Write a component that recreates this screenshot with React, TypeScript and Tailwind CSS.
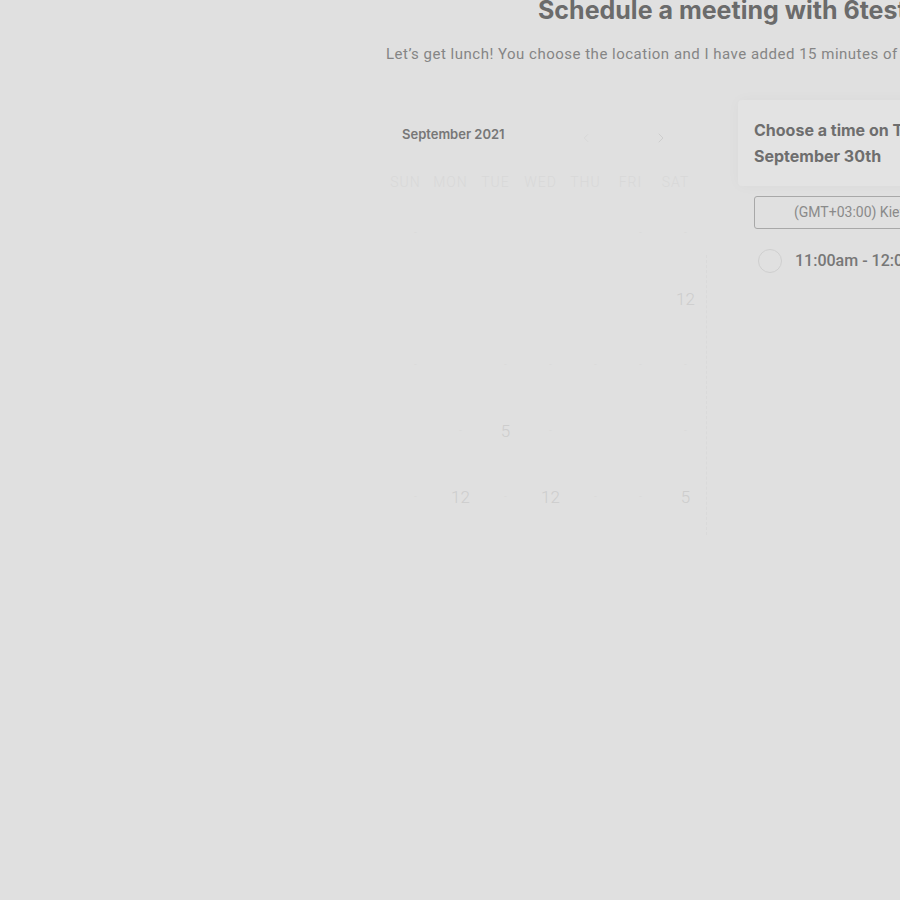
import { ChevronLeft, ChevronRight } from "lucide-react";

const weekDays = ["SUN", "MON", "TUE", "WED", "THU", "FRI", "SAT"];

const rows: string[][] = [
  ["-", "", "", "", "", "-", "-"],
  ["", "", "", "", "", "", "12"],
  ["-", "", "-", "-", "-", "-", "-"],
  ["", "-", "5", "-", "", "", "-"],
  ["-", "12", "-", "12", "-", "-", "5"],
];

export default function App() {
  return (
    <div className="h-[900px] w-full overflow-hidden bg-[#e0e0e0] font-['Roboto',sans-serif]">
      <div className="ml-[383px] w-[900px]">
        <h1 className="-mt-[6px] ml-[155px] whitespace-nowrap font-['Inter',sans-serif] text-[25px] font-bold leading-[32px] text-[#6b6b6b]">
          Schedule a meeting with 6test User
        </h1>
        <p className="ml-[3px] mt-[16px] whitespace-nowrap text-[15px] font-normal leading-[24px] tracking-[0.5px] text-[#858585]">
          Let’s get lunch! You choose the location and I have added 15 minutes of travel time to the meeting.
        </p>

        <div className="mt-[34px] flex">
          <div className="w-[323px] pt-[24px]">
            <div className="flex items-center">
              <span className="ml-[19px] font-['Inter',sans-serif] text-[13px] font-semibold text-[#777777]">
                September 2021
              </span>
              <ChevronLeft className="ml-[74px] mt-[6px] text-[#d6d6d6]" size={14} strokeWidth={1.5} />
              <ChevronRight className="ml-[60px] mt-[6px] text-[#cecece]" size={16} strokeWidth={1.5} />
            </div>
            <div className="mt-[26px] grid w-[315px] grid-cols-7 text-center text-[14px] font-light tracking-[1px] text-[#d8d8d8]">
              {weekDays.map((d) => (
                <span key={d}>{d}</span>
              ))}
            </div>
            <div className="ml-[10px] mt-[28px] grid w-[315px] grid-cols-7 text-center text-[17px] font-light text-[#cdcdcd]">
              {rows.map((row, r) =>
                row.map((v, c) => (
                  <span
                    key={`${r}-${c}`}
                    className={`h-[66px] leading-[24px] ${v === "-" ? "text-[#d9d9d9] text-[10px]" : ""}`}
                  >
                    {v}
                  </span>
                ))
              )}
            </div>
          </div>

          <div className="mt-[155px] h-[280px] w-px border-l border-dashed border-[#dadada]" />

          <div className="ml-[31px] w-[400px]">
            <div className="rounded-sm bg-[#e3e3e3] px-[16px] py-[17px] shadow-[0_0_14px_rgba(0,0,0,0.03)]">
              <h2 className="whitespace-nowrap font-['Inter',sans-serif] text-[16px] font-bold leading-[26px] text-[#6e6e6e]">
                Choose a time on Thursday,
                <br />
                September 30th
              </h2>
            </div>
            <div className="ml-[16px] mt-[10px] flex h-[33px] items-center rounded-[3px] border border-[#a8a8a8] pl-[39px] text-[14px] text-[#8a8a8a]">
              (GMT+03:00) Kiev
            </div>
            <div className="ml-[20px] mt-[20px] flex items-center">
              <span className="h-[24px] w-[24px] rounded-full border border-[#cfcfcf]" />
              <span className="ml-[13px] whitespace-nowrap text-[16px] font-medium text-[#777777]">
                11:00am - 12:00pm
              </span>
            </div>
          </div>
        </div>
      </div>
    </div>
  );
}
